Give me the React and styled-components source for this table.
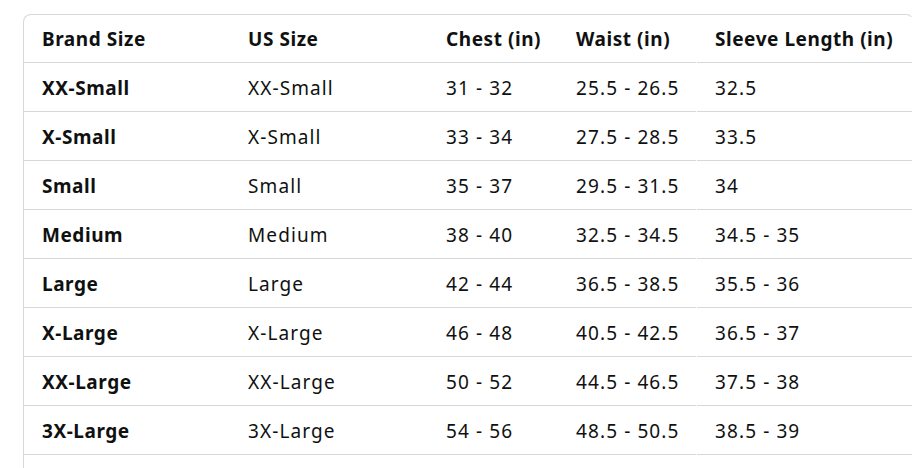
import React from "react";
import styled, { createGlobalStyle } from "styled-components";

const Global = createGlobalStyle`
  html, body { margin: 0; padding: 0; background: #ffffff; }
  body { font-family: "Noto Sans", "DejaVu Sans", sans-serif; color: #0f1111; }
`;

const Page = styled.div`
  padding: 14px 0 0 23px;
  width: 919px;
  height: 468px;
  box-sizing: border-box;
  overflow: hidden;
`;

const Card = styled.div`
  width: 889px;
  border: 1px solid #d5d9d9;
  border-right-color: transparent;
  border-bottom: none;
  border-radius: 8px 8px 0 0;
`;

const Row = styled.div`
  display: grid;
  grid-template-columns: 206px 198px 130px 138px 1px 215px;
  height: ${(p) => (p.$head ? "48px" : "49px")};
`;

const Cell = styled.div`
  display: flex;
  align-items: center;
  padding-left: 18px;
  padding-top: 1px;
  border-bottom: 1px solid #d5d9d9;
  font-size: 19px;
  font-weight: ${(p) => (p.$bold ? 700 : 400)};
  letter-spacing: ${(p) => (p.$bold ? "0.55px" : "1.1px")};
  white-space: nowrap;
`;

const Gap = styled.div``;

const headers = ["Brand Size", "US Size", "Chest (in)", "Waist (in)", "Sleeve Length (in)"];
const rows = [
  ["XX-Small", "XX-Small", "31 - 32", "25.5 - 26.5", "32.5"],
  ["X-Small", "X-Small", "33 - 34", "27.5 - 28.5", "33.5"],
  ["Small", "Small", "35 - 37", "29.5 - 31.5", "34"],
  ["Medium", "Medium", "38 - 40", "32.5 - 34.5", "34.5 - 35"],
  ["Large", "Large", "42 - 44", "36.5 - 38.5", "35.5 - 36"],
  ["X-Large", "X-Large", "46 - 48", "40.5 - 42.5", "36.5 - 37"],
  ["XX-Large", "XX-Large", "50 - 52", "44.5 - 46.5", "37.5 - 38"],
  ["3X-Large", "3X-Large", "54 - 56", "48.5 - 50.5", "38.5 - 39"],
];

function TableRow({ cells, head }) {
  return (
    <Row $head={head}>
      {cells.slice(0, 4).map((c, i) => (
        <Cell key={i} $bold={head || i === 0}>{c}</Cell>
      ))}
      <Gap />
      <Cell $bold={head}>{cells[4]}</Cell>
    </Row>
  );
}

export default function App() {
  return (
    <>
      <Global />
      <Page>
        <Card>
          <TableRow cells={headers} head />
          {rows.map((r, i) => (
            <TableRow key={i} cells={r} />
          ))}
          <TableRow cells={["", "", "", "", ""]} />
        </Card>
      </Page>
    </>
  );
}
